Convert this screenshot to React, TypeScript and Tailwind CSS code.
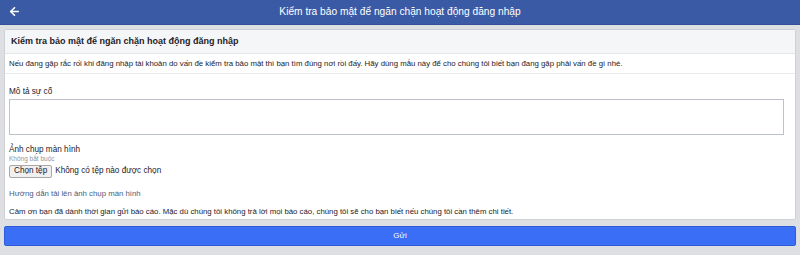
import { ArrowLeft } from 'lucide-react'

export default function App() {
  return (
    <div className="w-[800px] h-[255px] bg-[#dddfe2] font-['Liberation_Sans',Arial,sans-serif] overflow-hidden">
      <div className="h-[25px] bg-[#3b5aa5] flex items-center relative border-b border-[#35509a]">
        <ArrowLeft className="absolute left-[8px] top-[5px] text-white" size={13} strokeWidth={3} />
        <div className="flex-1 text-center text-white text-[10.2px]">
          Kiểm tra bảo mật để ngăn chặn hoạt động đăng nhập
        </div>
      </div>

      <div className="px-[4px] pt-[4px]">
        <div className="bg-white border border-[#cfd1d5] rounded-[2px]">
          <div className="h-[24px] bg-[#f5f6f7] border-b border-[#e5e6e9] flex items-center px-[6px]">
            <span className="text-[9px] font-bold text-[#1d2129]">
              Kiểm tra bảo mật để ngăn chặn hoạt động đăng nhập
            </span>
          </div>
          <div className="h-[20px] border-b border-[#e9eaed] flex items-center px-[4px] text-[7.8px] text-[#1d2129]">
            Nếu đang gặp rắc rối khi đăng nhập tài khoản do vấn đề kiểm tra bảo mật thì bạn tìm đúng nơi rồi đấy. Hãy dùng mẫu này để cho chúng tôi biết bạn đang gặp phải vấn đề gì nhé.
          </div>
          <div className="px-[4px] pt-[13px] pb-[2px]">
            <div className="text-[8.2px] text-[#1d2129] leading-[10px]">Mô tả sự cố</div>
            <div className="mt-[2px] mr-[7px] h-[36px] border border-[#bdc1c9] bg-white"></div>
            <div className="mt-[10px] text-[8.2px] text-[#1d2129] leading-[10px]">Ảnh chụp màn hình</div>
            <div className="text-[6.5px] text-[#90949c] leading-[8px]">Không bắt buộc</div>
            <div className="flex items-center gap-[3px] mt-[2px]">
              <span className="text-[8.2px] text-[#1d2129] px-[4px] h-[13px] flex items-center border border-[#a8a8a8] rounded-[2px] bg-[#f0f0f0]">
                Chọn tệp
              </span>
              <span className="text-[8.2px] text-[#1d2129]">Không có tệp nào được chọn</span>
            </div>
            <div className="mt-[11px] text-[7.8px] text-[#4b5a7c] leading-[10px]">Hướng dẫn tải lên ảnh chụp màn hình</div>
            <div className="mt-[8px] text-[7.8px] text-[#1d2129] leading-[10px]">
              Cảm ơn bạn đã dành thời gian gửi báo cáo. Mặc dù chúng tôi không trả lời mọi báo cáo, chúng tôi sẽ cho bạn biết nếu chúng tôi cần thêm chi tiết.
            </div>
          </div>
        </div>
        <div className="mt-[6px] h-[20px] bg-[#3b6ef7] border border-[#2f5bd4] rounded-[2px] flex items-center justify-center text-white text-[8px]">
          Gửi
        </div>
      </div>
    </div>
  )
}
